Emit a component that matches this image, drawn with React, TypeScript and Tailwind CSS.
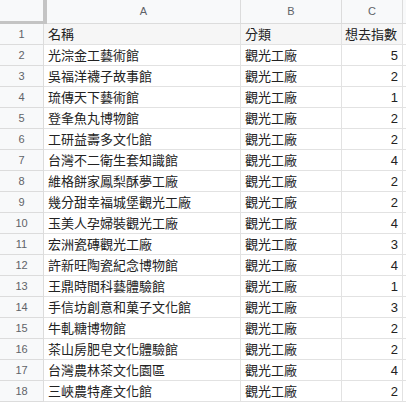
const ROWS: [string, string, string][] = [
  ["名稱", "分類", "想去指數"],
  ["光淙金工藝術館", "觀光工廠", "5"],
  ["吳福洋襪子故事館", "觀光工廠", "2"],
  ["琉傳天下藝術館", "觀光工廠", "1"],
  ["登夆魚丸博物館", "觀光工廠", "2"],
  ["工研益壽多文化館", "觀光工廠", "2"],
  ["台灣不二衛生套知識館", "觀光工廠", "4"],
  ["維格餅家鳳梨酥夢工廠", "觀光工廠", "2"],
  ["幾分甜幸福城堡觀光工廠", "觀光工廠", "2"],
  ["玉美人孕婦裝觀光工廠", "觀光工廠", "4"],
  ["宏洲瓷磚觀光工廠", "觀光工廠", "3"],
  ["許新旺陶瓷紀念博物館", "觀光工廠", "4"],
  ["王鼎時間科藝體驗館", "觀光工廠", "1"],
  ["手信坊創意和菓子文化館", "觀光工廠", "3"],
  ["牛軋糖博物館", "觀光工廠", "2"],
  ["茶山房肥皂文化體驗館", "觀光工廠", "2"],
  ["台灣農林茶文化園區", "觀光工廠", "4"],
  ["三峽農特產文化館", "觀光工廠", "2"],
]

export default function App() {
  return (
    <div
      className="w-[406px] h-[404px] overflow-hidden bg-white text-[#222]"
      style={{ fontFamily: '"Liberation Sans", "Noto Sans CJK TC", sans-serif' }}
    >
      {/* column headers */}
      <div className="flex h-[24px] bg-[#f8f9fa] text-[11px] text-[#5f6368]">
        <div className="w-[47px] shrink-0 border-r-[4px] border-b-[3px] border-[#c4c4c4]" />
        <div className="w-[194px] shrink-0 flex items-center justify-center border-r border-b border-[#dcdcdc]">A</div>
        <div className="w-[101px] shrink-0 flex items-center justify-center border-r border-b border-[#dcdcdc]">B</div>
        <div className="w-[61px] shrink-0 flex items-center justify-center border-r border-b border-[#dcdcdc]">C</div>
        <div className="flex-1 border-b border-[#dcdcdc]" />
      </div>

      {ROWS.map(([name, cat, score], i) => (
        <div key={i} className={`flex h-[21px] ${i === 0 ? "bg-[#f6f6f6]" : ""}`}>
          <div className="w-[44px] shrink-0 flex items-center justify-center bg-[#f8f9fa] text-[11px] text-[#5f6368] border-r border-b border-[#dcdcdc]">
            {i + 1}
          </div>
          <div className="w-[197px] shrink-0 flex items-center pl-[4px] text-[13px] leading-none border-r border-b border-[#e2e2e2] whitespace-nowrap overflow-hidden">
            {name}
          </div>
          <div className="w-[101px] shrink-0 flex items-center pl-[4px] text-[13px] leading-none border-r border-b border-[#e2e2e2] whitespace-nowrap overflow-hidden">
            {cat}
          </div>
          <div
            className={`w-[61px] shrink-0 flex items-center pr-[4px] text-[13px] leading-none border-r border-b border-[#e2e2e2] whitespace-nowrap overflow-hidden ${
              i === 0 ? "justify-start pl-[3px]" : "justify-end"
            }`}
          >
            {score}
          </div>
          <div className="flex-1 border-b border-[#e2e2e2] bg-white" />
        </div>
      ))}
    </div>
  )
}
